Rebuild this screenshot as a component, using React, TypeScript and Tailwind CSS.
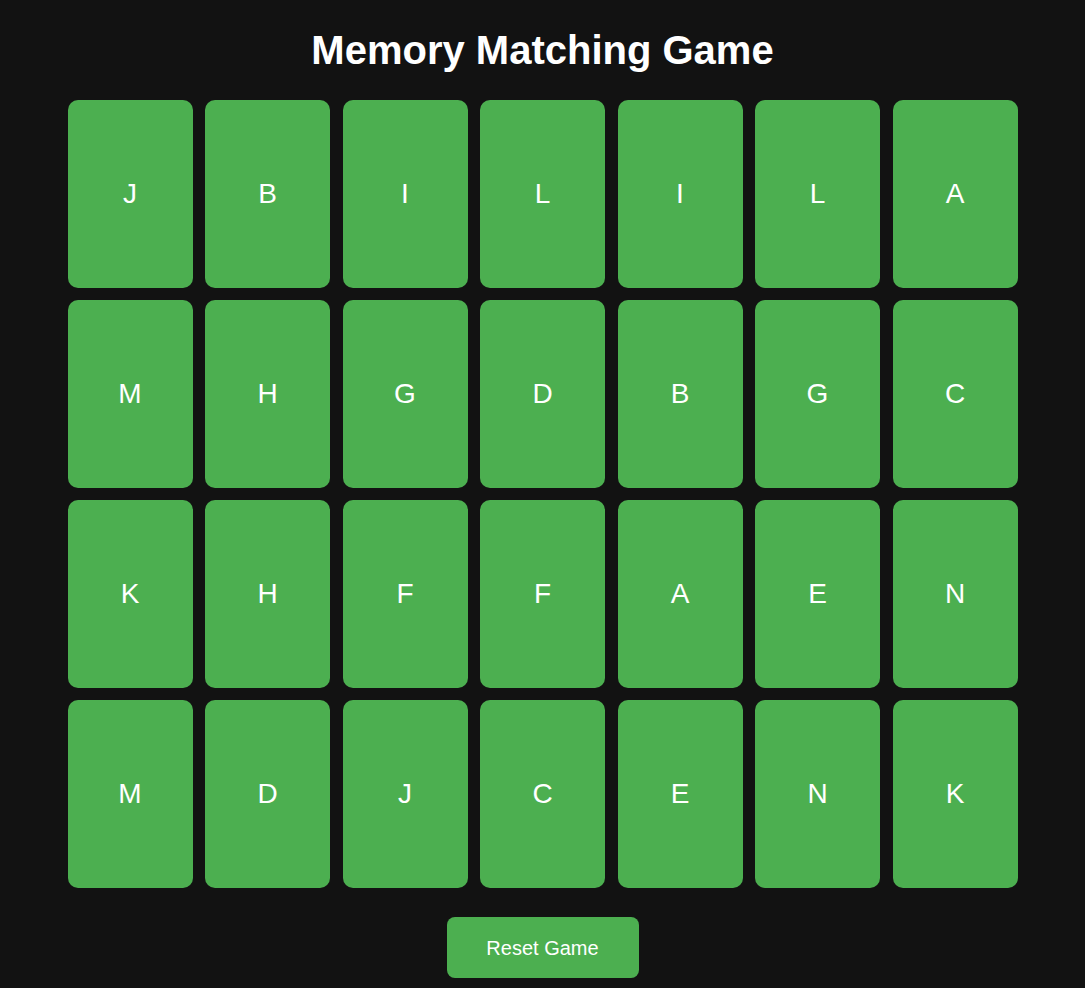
import React, { useState } from "react";

const LETTERS = [
  "J", "B", "I", "L", "I", "L", "A",
  "M", "H", "G", "D", "B", "G", "C",
  "K", "H", "F", "F", "A", "E", "N",
  "M", "D", "J", "C", "E", "N", "K",
];

export default function App() {
  const [cards, setCards] = useState(LETTERS);

  const reset = () => setCards([...LETTERS]);

  return (
    <div className="min-h-screen w-full bg-[#121212] text-white font-['Liberation_Sans',Arial,sans-serif] flex flex-col items-center pt-[26px]">
      <h1 className="text-[40px] leading-[48px] font-bold mb-[26px]">Memory Matching Game</h1>

      <div className="grid grid-cols-7 gap-x-[12.5px] gap-y-[12px] w-[950px]">
        {cards.map((letter, i) => (
          <div
            key={i}
            className="h-[188px] rounded-[10px] bg-[#4caf50] flex items-center justify-center text-[28px] cursor-pointer"
          >
            {letter}
          </div>
        ))}
      </div>

      <button
        onClick={reset}
        className="mt-[29px] w-[192px] h-[61px] rounded-[8px] bg-[#4caf50] text-white text-[20px] flex items-center justify-center"
      >
        Reset Game
      </button>
    </div>
  );
}
